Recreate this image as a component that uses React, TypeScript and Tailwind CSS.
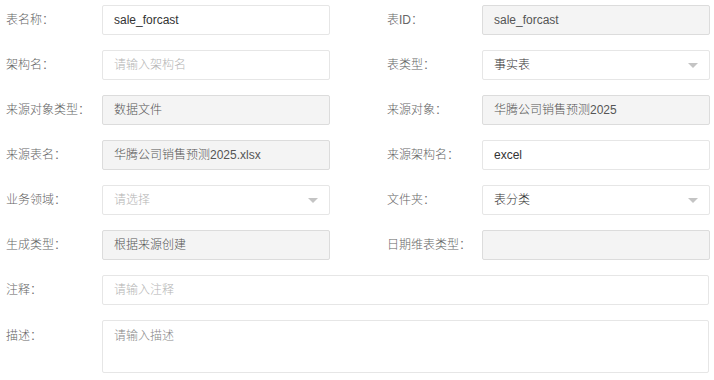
type Field = {
  label: string;
  value?: string;
  placeholder?: string;
  disabled?: boolean;
  select?: boolean;
};

const rows: [Field, Field][] = [
  [
    { label: "表名称：", value: "sale_forcast" },
    { label: "表ID：", value: "sale_forcast", disabled: true },
  ],
  [
    { label: "架构名：", placeholder: "请输入架构名" },
    { label: "表类型：", value: "事实表", select: true },
  ],
  [
    { label: "来源对象类型：", value: "数据文件", disabled: true },
    { label: "来源对象：", value: "华腾公司销售预测2025", disabled: true },
  ],
  [
    { label: "来源表名：", value: "华腾公司销售预测2025.xlsx", disabled: true },
    { label: "来源架构名：", value: "excel" },
  ],
  [
    { label: "业务领域：", placeholder: "请选择", select: true },
    { label: "文件夹：", value: "表分类", select: true },
  ],
  [
    { label: "生成类型：", value: "根据来源创建", disabled: true },
    { label: "日期维表类型：", disabled: true },
  ],
];

function Caret() {
  return (
    <svg width="10" height="5" viewBox="0 0 10 5" className="shrink-0">
      <path d="M0 0h10L5 5z" fill="#c4c4c4" />
    </svg>
  );
}

function Box({ f }: { f: Field }) {
  return (
    <div
      className={`flex h-[30px] w-[228px] items-center justify-between rounded-[2px] border px-[11px] ${
        f.disabled
          ? "border-[#dcdcdc] bg-[#f4f4f4] text-[#555]"
          : "border-[#e6e6e6] bg-white text-[#333]"
      }`}
    >
      {f.value ? (
        <span>{f.value}</span>
      ) : (
        <span className="text-[#b4b4b4]">{f.placeholder}</span>
      )}
      {f.select && <Caret />}
    </div>
  );
}

export default function App() {
  return (
    <div
      className="h-[380px] w-[714px] bg-white pt-[5px] text-[12px] font-light text-[#666]"
      style={{ fontFamily: '"Liberation Sans", "Noto Sans CJK SC", sans-serif' }}
    >
      <div className="flex flex-col gap-[15px]">
        {rows.map(([l, r], i) => (
          <div key={i} className="flex items-center">
            <div className="w-[102px] pl-[6px]">{l.label}</div>
            <Box f={l} />
            <div className="w-[152px] pl-[57px]">{r.label}</div>
            <Box f={r} />
          </div>
        ))}
        <div className="flex items-center">
          <div className="w-[102px] pl-[6px]">注释：</div>
          <div className="flex h-[30px] w-[607px] items-center rounded-[2px] border border-[#e6e6e6] px-[11px] text-[#b4b4b4]">
            请输入注释
          </div>
        </div>
        <div className="flex items-start">
          <div className="w-[102px] pl-[6px] pt-[7px]">描述：</div>
          <div className="h-[53px] w-[607px] rounded-[2px] border border-[#e6e6e6] px-[11px] pt-[6px] text-[#888]">
            请输入描述
          </div>
        </div>
      </div>
    </div>
  );
}
